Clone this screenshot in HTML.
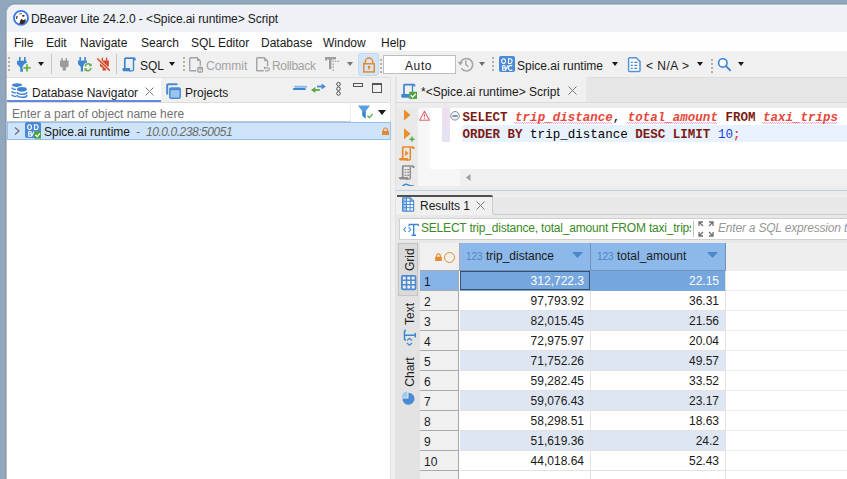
<!DOCTYPE html>
<html><head><meta charset="utf-8">
<style>
*{margin:0;padding:0;box-sizing:border-box}
html,body{width:847px;height:479px;overflow:hidden;background:#90a7bd;font-family:"Liberation Sans",sans-serif;font-size:12px;color:#1a1a1a}
.a{position:absolute}
.t{position:absolute;white-space:nowrap;line-height:14px}
.mono{font-family:"Liberation Mono",monospace}
svg{position:absolute;overflow:visible}
.tri{position:absolute;width:0;height:0;border-left:3.5px solid transparent;border-right:3.5px solid transparent;border-top:4px solid #1a1a1a}
.grip{position:absolute;width:2px;height:16px;background:repeating-linear-gradient(#b9b2a2 0 2px,transparent 2px 4px)}
.row{position:absolute;left:420px;width:427px;height:20px;border-bottom:1px solid #eeeeee}
.rn{position:absolute;left:0;top:0;width:39px;height:20px;background:#f0f0f0;border-right:1px solid #a9a9a9;border-bottom:1px solid #a9a9a9}
.rn span{position:absolute;left:4px;top:4px;line-height:14px}
.c1{position:absolute;left:40px;top:0;width:131px;height:20px;border-right:1px solid #e2e2e2;border-bottom:1px solid #e2e2e2;text-align:right;padding-right:6px;line-height:20px}
.c2{position:absolute;left:171px;top:0;width:135px;height:20px;border-right:1px solid #e2e2e2;border-bottom:1px solid #e2e2e2;text-align:right;padding-right:6px;line-height:20px}
.alt .c1,.alt .c2{background:#dfe6f3}
</style></head><body>
<!-- window -->
<div class="a" style="left:5px;top:3px;width:850px;height:480px;background:#8a9daf;border-top-left-radius:10px"></div>
<div class="a" style="left:6px;top:4px;width:850px;height:480px;background:#b6bfc8;border-top-left-radius:9px"></div>
<div class="a" style="left:7px;top:5px;width:850px;height:480px;background:#f0f0f0;border-top-left-radius:8px;overflow:hidden">
  <div class="a" style="left:0;top:0;width:850px;height:27px;background:#eef2f7;border-top:1px solid #f5f8fb"></div>
  <div class="a" style="left:0;top:27px;width:850px;height:19px;background:#fefefe"></div>
</div>
<!-- title -->
<svg style="left:13px;top:10px" width="16" height="16" viewBox="0 0 16 16">
  <circle cx="8" cy="7.9" r="7" fill="#fff" stroke="#3b75e6" stroke-width="1.8"/>
  <ellipse cx="10.3" cy="5.8" rx="1.3" ry="0.9" fill="#2a1e18"/>
  <path d="M6 3.8q1.5-1 3-0.6l-0.5 1.2q-1.3-0.3-2.3 0.3z" fill="#7a6a60"/>
  <path d="M3.2 6.3q0.5-0.6 1.5-0.6l-0.5 3-1.2 0.5z" fill="#4a3a30"/>
  <path d="M6.4 14q0.2-3 1.8-5.3q1.3 1.2 2.5 1.2q1.2-0.3 1.5-1.4l0.6 2.5q-1 2.2-3 3.3z" fill="#3a2a20"/>
</svg>
<div class="t" style="left:31px;top:12px;letter-spacing:-0.08px">DBeaver Lite 24.2.0 - &lt;Spice.ai runtime&gt; Script</div>
<!-- menu -->
<div class="t" style="left:14px;top:36px">File</div>
<div class="t" style="left:46px;top:36px">Edit</div>
<div class="t" style="left:80px;top:36px">Navigate</div>
<div class="t" style="left:141px;top:36px">Search</div>
<div class="t" style="left:191px;top:36px">SQL Editor</div>
<div class="t" style="left:261px;top:36px">Database</div>
<div class="t" style="left:323px;top:36px">Window</div>
<div class="t" style="left:381px;top:36px">Help</div>

<!-- toolbar -->
<div class="grip" style="left:8px;top:57px"></div>
<!-- plug + -->
<svg style="left:17px;top:57px" width="15" height="15" viewBox="0 0 15 15">
  <rect x="2" y="0" width="1.6" height="4" fill="#3d85d1"/><rect x="7" y="0" width="1.6" height="4" fill="#3d85d1"/>
  <path d="M0 3.7H9.7V6.3L6 10.5V14.7H3.3V10.5L0 7z" fill="#3d85d1"/>
  <path d="M6.4 12.2a4.6 4.6 0 0 1 4.7-5.4" stroke="#f0f0f0" stroke-width="2" fill="none"/>
  <path d="M10 7.2v7.3M6.4 10.8h7.3" stroke="#6cb04d" stroke-width="1.8"/>
</svg>
<div class="tri" style="left:38px;top:62px;border-left-width:3.5px;border-right-width:3.5px;border-top-width:4.5px"></div>
<div class="a" style="left:51px;top:54px;width:1px;height:20px;background:#c6c6c6"></div>
<!-- gray plug -->
<svg style="left:60px;top:58px" width="9" height="13" viewBox="0 0 9 13">
  <rect x="1.3" y="0" width="1.4" height="3" fill="#9b9b9b"/><rect x="5.6" y="0" width="1.4" height="3" fill="#9b9b9b"/>
  <path d="M0 2.6H8.6V7.5Q8.6 9 7 9.2L5.9 9.3V12.5H2.6V9.3L1.6 9.2Q0 9 0 7.5z" fill="#9b9b9b"/>
</svg>
<!-- blue plug refresh -->
<svg style="left:78px;top:57px" width="15" height="15" viewBox="0 0 15 15">
  <rect x="1.4" y="0" width="1.6" height="3.6" fill="#3d85d1"/><rect x="6.3" y="0" width="1.6" height="3.6" fill="#3d85d1"/>
  <path d="M0 3.5H9V6L5 10V14.5H2.8V10L0 7z" fill="#3d85d1"/>
  <circle cx="10" cy="10.2" r="4.8" fill="#f0f0f0"/>
  <path d="M7.2 9.5a3 3 0 0 1 5.2-1.8M12.9 11a3 3 0 0 1-5.2 1.8" stroke="#5aa845" stroke-width="1.5" fill="none"/>
  <path d="M13.6 6.3v3h-3z" fill="#5aa845"/><path d="M6.5 14.2v-3h3z" fill="#5aa845"/>
</svg>
<!-- red plug crossed -->
<svg style="left:97px;top:57px" width="14" height="15" viewBox="0 0 14 15">
  <rect x="4.6" y="0.7" width="1.4" height="3" fill="#d64a28"/><rect x="8.9" y="0.7" width="1.4" height="3" fill="#d64a28"/>
  <path d="M3 3.6H11.9V8.5Q11.9 10 10.3 10.2L9.1 10.3V13.5H5.5V10.3L4.5 10.2Q3 10 3 8.5z" fill="#d64a28"/>
  <path d="M0.3 1.5L12.8 13.6" stroke="#f0f0f0" stroke-width="3"/>
  <path d="M0.3 1.5L12.8 13.6" stroke="#d64a28" stroke-width="1.5"/>
</svg>
<div class="a" style="left:116px;top:54px;width:1px;height:20px;background:#c6c6c6"></div>
<!-- SQL scroll -->
<svg style="left:122px;top:57px" width="14" height="15" viewBox="0 0 14 15">
  <path d="M2.8 11.2V2.3a1.2 1.2 0 0 1 1.2-1.2H12.8" stroke="#3d85d1" stroke-width="1.7" fill="none"/>
  <path d="M11.5 1.5V12.3a1.6 1.6 0 0 1-1.6 1.6H7" stroke="#3d85d1" stroke-width="1.4" fill="none"/>
  <path d="M0.6 11H8.1V14.3H1.8a1.2 1.2 0 0 1-1.2-1.2z" fill="#3d85d1"/>
  <circle cx="12.6" cy="2.2" r="1.2" fill="#3d85d1"/>
</svg>
<div class="t" style="left:140px;top:59px">SQL</div>
<div class="tri" style="left:169px;top:62px;border-left-width:3.5px;border-right-width:3.5px;border-top-width:4.5px"></div>
<div class="grip" style="left:183px;top:57px"></div>
<!-- commit doc -->
<svg style="left:188px;top:56px" width="16" height="17" viewBox="0 0 16 17">
  <path d="M8.3 14.8H2.6a0.9 0.9 0 0 1-0.9-0.9V2.6a0.9 0.9 0 0 1 0.9-0.9H9L12.3 5v4.8" stroke="#a3a3a3" stroke-width="1.4" fill="none"/>
  <path d="M9 1.6V5.1h3.5z" fill="#a3a3a3"/>
  <rect x="9.9" y="11.4" width="4.6" height="4.6" rx="0.8" stroke="#a3a3a3" stroke-width="1.3" fill="none"/>
  <path d="M10.6 11.9l1.7 1.6 1.7-1.6" stroke="#a3a3a3" stroke-width="1.1" fill="none"/>
</svg>
<div class="t" style="left:206px;top:59px;color:#a2a2a2">Commit</div>
<!-- rollback doc -->
<svg style="left:255px;top:56px" width="17" height="17" viewBox="0 0 17 17">
  <path d="M8.8 14.8H2.6a0.9 0.9 0 0 1-0.9-0.9V2.6a0.9 0.9 0 0 1 0.9-0.9H9.2L12.6 5v5.3" stroke="#a3a3a3" stroke-width="1.4" fill="none"/>
  <path d="M9.2 1.6V5.3h3.7z" fill="#a3a3a3"/>
  <path d="M9.6 11.8h3.2a1.5 1.5 0 0 1 0 3H10" stroke="#a3a3a3" stroke-width="1.3" fill="none"/>
  <path d="M9.6 10.8v2.4" stroke="#a3a3a3" stroke-width="1.3"/>
</svg>
<div class="t" style="left:272px;top:59px;color:#a2a2a2;letter-spacing:-0.3px">Rollback</div>
<!-- T icon -->
<svg style="left:324px;top:56px" width="17" height="17" viewBox="0 0 17 17">
  <path d="M1 1h11v2.4H1z" fill="#9c9c9c"/>
  <path d="M1 1h2v3.6H1z" fill="#9c9c9c"/>
  <rect x="5" y="1" width="2.4" height="12" fill="#9c9c9c"/>
  <path d="M9.2 4.5v1.4M9.2 7.5v1.4M9.2 10.5v1.4M9.2 13.5v1.4" stroke="#a0a0a0" stroke-width="1.3"/>
  <path d="M11 5.4h1.4M13.6 5.4h1.4" stroke="#a0a0a0" stroke-width="1.4"/>
</svg>
<div class="tri" style="left:347px;top:62px;border-top-color:#777;border-left-width:3.3px;border-right-width:3.3px;border-top-width:4.5px"></div>
<div class="a" style="left:358px;top:53px;width:21px;height:23px;background:#d3e5fa;border:1px solid #c0daf6;border-radius:3px"></div>
<svg style="left:362px;top:57px" width="14" height="16" viewBox="0 0 14 16">
  <path d="M3.2 6.5V4.9a3.8 3.8 0 0 1 7.6 0v1.6" stroke="#e8892a" stroke-width="1.5" fill="none"/>
  <rect x="1.75" y="6.75" width="10.5" height="8.2" stroke="#e8892a" stroke-width="1.5" fill="#d3e5fa"/>
  <circle cx="7" cy="10" r="1.3" fill="#e8892a"/><rect x="6.4" y="10" width="1.2" height="2.6" fill="#e8892a"/>
</svg>
<div class="grip" style="left:380px;top:59px"></div>
<div class="a" style="left:383px;top:55px;width:73px;height:19px;background:#fff;border:1px solid #bdbdbd"></div>
<div class="t" style="left:405px;top:59px;letter-spacing:0.6px">Auto</div>
<!-- history clock -->
<svg style="left:457px;top:56px" width="17" height="17" viewBox="0 0 17 17">
  <path d="M3.6 6.3A6.3 6.3 0 1 1 4.4 12.6" stroke="#a6a6a6" stroke-width="1.6" fill="none"/>
  <path d="M0.8 5.8L3.3 9.4L6 6z" fill="#a6a6a6"/>
  <path d="M8.8 4.3v4.2l2.6 2.2" stroke="#a6a6a6" stroke-width="1.5" fill="none"/>
</svg>
<div class="tri" style="left:479px;top:62px;border-top-color:#6e6e6e;border-left-width:3.5px;border-right-width:3.5px;border-top-width:4.8px"></div>
<div class="grip" style="left:492px;top:57px"></div>
<svg style="left:499px;top:56px" width="16" height="16" viewBox="0 0 16 16">
  <rect x="0" y="0" width="16" height="16" rx="2" fill="#4a8ad4"/>
  <g stroke="#fff" stroke-width="1.1" fill="none">
  <ellipse cx="4.6" cy="5.1" rx="1.9" ry="2.4"/>
  <path d="M9.5 2.7V7.5H10.9A2.2 2.4 0 0 0 10.9 2.7z"/>
  <path d="M3.7 9.5V14.2H5.5a1.2 1.2 0 0 0 0-2.4H3.7M3.7 9.5H5.2a1.1 1.15 0 0 1 0 2.3"/>
  <path d="M6.4 14.6L9.3 9.2"/>
  <path d="M13.3 10.2A2.2 2.5 0 1 0 13.3 13.6"/>
  </g>
</svg>
<div class="t" style="left:517px;top:59px">Spice.ai runtime</div>
<div class="tri" style="left:612px;top:62px;border-left-width:3.5px;border-right-width:3.5px;border-top-width:4.5px"></div>
<!-- doc icon -->
<svg style="left:627px;top:56px" width="15" height="17" viewBox="0 0 15 17">
  <path d="M2.6 1.8H9.2L13 5.6V14.4a1 1 0 0 1-1 1H2.6a1 1 0 0 1-1-1V2.8a1 1 0 0 1 1-1z" stroke="#5593d6" stroke-width="1.5" fill="#fff"/>
  <path d="M3.8 6.3h2M7.3 6.3h3M3.8 9.4h2M7.3 9.4h3M3.8 12.4h2M7.3 12.4h3" stroke="#3d85d1" stroke-width="1.3"/>
</svg>
<div class="t" style="left:646px;top:59px;letter-spacing:0.5px">&lt; N/A &gt;</div>
<div class="tri" style="left:697px;top:62px;border-left-width:3.5px;border-right-width:3.5px;border-top-width:4.5px"></div>
<div class="grip" style="left:711px;top:59px"></div>
<svg style="left:717px;top:57px" width="15" height="15" viewBox="0 0 15 15">
  <circle cx="5.8" cy="5.9" r="4.2" stroke="#3d85d1" stroke-width="1.6" fill="#fff"/>
  <path d="M8.9 9l4.3 4.3" stroke="#3d85d1" stroke-width="1.8" stroke-linecap="round"/>
</svg>
<div class="tri" style="left:738px;top:62px;border-left-width:3.5px;border-right-width:3.5px;border-top-width:4.8px"></div>

<!-- left panel -->
<div class="a" style="left:7px;top:77px;width:384px;height:402px;background:#fff;border-right:1px solid #e3e3e3"></div>
<div class="a" style="left:7px;top:77px;width:384px;height:26px;background:#f0f0f0;border-top:1px solid #dedede;border-bottom:1px solid #dcdcdc;border-right:1px solid #e3e3e3"></div>
<div class="a" style="left:7px;top:78px;width:154px;height:24px;background:#fff"></div>
<div class="a" style="left:7px;top:100px;width:154px;height:2px;background:#6388de"></div>
<svg style="left:11px;top:82px" width="17" height="17" viewBox="0 0 17 17">
  <ellipse cx="6" cy="3.1" rx="5" ry="1.8" fill="#3d85d1"/>
  <path d="M1 5.6a5 2 0 0 0 10 0M1 9a5 2 0 0 0 10 0M1 12.4a5 2 0 0 0 10 0" stroke="#3d85d1" stroke-width="1.5" fill="none"/>
  <path d="M5 7.3a5.9 3.2 0 0 1 11.8 0V13.5a5.9 3.4 0 0 1-11.8 0z" fill="#fff"/>
  <ellipse cx="10.9" cy="7.3" rx="4.9" ry="2.4" fill="#3d85d1"/>
  <path d="M6 9.9a4.9 2.4 0 0 0 9.8 0M6 12.9a4.9 2.4 0 0 0 9.8 0" stroke="#3d85d1" stroke-width="1.6" fill="none"/>
</svg>
<div class="t" style="left:32px;top:86px">Database Navigator</div>
<svg style="left:145px;top:87px" width="9" height="9" viewBox="0 0 9 9"><path d="M0.5 0.5l8 8M8.5 0.5l-8 8" stroke="#7a7a7a" stroke-width="1"/></svg>
<svg style="left:166px;top:83px" width="16" height="17" viewBox="0 0 16 17">
  <path d="M1.2 11.5V2.2a1 1 0 0 1 1-1H11.5" stroke="#4a8ad4" stroke-width="2" fill="none"/>
  <rect x="3.8" y="5" width="10.4" height="10.2" rx="1.2" fill="#9cc5ee" stroke="#4a8ad4" stroke-width="1.5"/>
  <path d="M3.8 6.2h10.4" stroke="#4a8ad4" stroke-width="2"/>
</svg>
<div class="t" style="left:185px;top:86px">Projects</div>
<svg style="left:293px;top:85px" width="14" height="6" viewBox="0 0 14 6"><path d="M2.2 1.8h11" stroke="#8cb9e9" stroke-width="1.9" stroke-linecap="round"/><path d="M1 4h10.8" stroke="#3d85d1" stroke-width="2.1" stroke-linecap="round"/></svg>
<svg style="left:311px;top:83px" width="15" height="11" viewBox="0 0 15 11">
  <path d="M6 3.5h5" stroke="#4a8ad4" stroke-width="1.8"/><path d="M14.8 3.5L10.6 0.6V6.4z" fill="#4a8ad4"/>
  <path d="M3.8 7h5" stroke="#5aa845" stroke-width="1.8"/><path d="M0 7l4.3-2.9v5.8z" fill="#5aa845"/>
</svg>
<svg style="left:335px;top:81px" width="7" height="16" viewBox="0 0 7 16"><g stroke="#505050" stroke-width="1" fill="none"><circle cx="3.5" cy="3.2" r="1.8"/><circle cx="3.5" cy="7.8" r="1.8"/><circle cx="3.5" cy="12.4" r="1.8"/></g></svg>
<div class="a" style="left:353px;top:83px;width:10px;height:4px;border:1px solid #555"></div>
<div class="a" style="left:372px;top:83px;width:10px;height:10px;border:1px solid #555;border-top-width:2px"></div>
<!-- filter -->
<div class="a" style="left:7px;top:102px;width:344px;height:20px;border-bottom:1px solid #c9c9c9;border-right:1px solid #ececec"></div>
<div class="t" style="left:12px;top:107px;color:#727272">Enter a part of object name here</div>
<svg style="left:358px;top:105px" width="16" height="14" viewBox="0 0 16 14">
  <path d="M0 0.5h12L7.6 6.2v7.3L4.4 10.8V6.2z" fill="#5a9fe0"/>
  <path d="M4.4 6.2h3.2v7.3L4.4 10.8z" fill="#3d85d1"/>
  <path d="M9.5 10.8l1.9 1.9 3.2-3.8" stroke="#5fb04d" stroke-width="1.4" fill="none"/>
</svg>
<div class="tri" style="left:378px;top:110px;border-left-width:4px;border-right-width:4px;border-top-width:5px"></div>
<!-- tree row -->
<div class="a" style="left:7px;top:122px;width:384px;height:18px;background:#cde4fa;border:1px solid #93c0ec"></div>
<svg style="left:14px;top:127px" width="6" height="8" viewBox="0 0 6 8"><path d="M1 0.5l4 3.5-4 3.5" stroke="#6f6f6f" stroke-width="1.2" fill="none"/></svg>
<svg style="left:25px;top:122px" width="17" height="17" viewBox="0 0 17 17">
  <rect x="0" y="0" width="16" height="16" rx="2" fill="#4a8ad4"/>
  <g stroke="#fff" stroke-width="1.1" fill="none">
  <ellipse cx="4.6" cy="5.1" rx="1.9" ry="2.4"/>
  <path d="M9.5 2.7V7.5H10.9A2.2 2.4 0 0 0 10.9 2.7z"/>
  <path d="M3.7 9.5V14.2H5.5a1.2 1.2 0 0 0 0-2.4H3.7M3.7 9.5H5.2a1.1 1.15 0 0 1 0 2.3"/>
  <path d="M6.4 14.6L9.3 9.2"/>
  </g>
  <rect x="9.2" y="9.3" width="6.8" height="7.3" fill="#4ba43d"/>
  <path d="M10.4 12.8l1.8 1.8 2.8-3.3" stroke="#fff" stroke-width="1.3" fill="none"/>
</svg>
<div class="t" style="left:44px;top:125px">Spice.ai runtime</div>
<div class="t" style="left:136px;top:125px;font-style:italic;color:#6b6b6b">-</div><div class="t" style="left:146px;top:125px;font-style:italic;color:#6b6b6b;letter-spacing:-0.45px">10.0.0.238:50051</div>
<svg style="left:382px;top:127px" width="7" height="8" viewBox="0 0 7 8"><path d="M1.5 4V3a2 2 0 0 1 4 0v1" stroke="#e5892e" stroke-width="1.2" fill="none"/><rect x="0" y="4" width="7" height="4" fill="#e5892e"/></svg>

<!-- right panel: editor -->
<div class="a" style="left:395px;top:77px;width:452px;height:402px;background:#e8e8e8;border-left:1px solid #e2e2e2"></div>
<div class="a" style="left:396px;top:77px;width:451px;height:26px;background:#e6e6e6"></div>
<div class="a" style="left:395px;top:77px;width:452px;height:1px;background:#dedede"></div>
<div class="a" style="left:397px;top:77px;width:189px;height:25px;background:#f0f0f0"></div>
<svg style="left:401px;top:83px" width="17" height="17" viewBox="0 0 17 17">
  <path d="M3 11.5V2.3a0.6 0.6 0 0 1 .6-.6H13.5" stroke="#3d85d1" stroke-width="1.7" fill="none"/>
  <path d="M11.5 2v8" stroke="#3d85d1" stroke-width="1.3"/>
  <circle cx="13.4" cy="2.5" r="1.1" fill="#3d85d1"/>
  <path d="M0.3 11H8.4V14.7H1.5a1.2 1.2 0 0 1-1.2-1.2z" fill="#3d85d1"/>
  <rect x="8.2" y="8.8" width="7.8" height="7.1" fill="#4ba43d"/>
  <path d="M9.7 12.2l2 1.9 3-3.4" stroke="#fff" stroke-width="1.3" fill="none"/>
</svg>
<div class="t" style="left:421px;top:85px">*&lt;Spice.ai runtime&gt; Script</div>
<svg style="left:568px;top:86px" width="9" height="9" viewBox="0 0 9 9"><path d="M0.5 0.5l8 8M8.5 0.5l-8 8" stroke="#7a7a7a" stroke-width="1"/></svg>
<div class="a" style="left:396px;top:103px;width:451px;height:84px;background:#ececec"></div>
<div class="a" style="left:396px;top:102px;width:451px;height:1px;background:#dadada"></div>
<!-- editor side toolbar -->
<div class="a" style="left:396px;top:108px;width:22px;height:78px;background:#e9e9e9"></div>
<svg style="left:404px;top:109px" width="8" height="12" viewBox="0 0 8 12"><path d="M0 0.5l6.6 5.5L0 11.5z" fill="#e8912c"/></svg>
<svg style="left:404px;top:128px" width="12" height="14" viewBox="0 0 12 14"><path d="M0 0.3l6.6 5.5L0 11.3z" fill="#e8912c"/><path d="M8 8.6v5.2M5.4 11.2h5.2" stroke="#4fae49" stroke-width="1.4"/></svg>
<svg style="left:399px;top:146px" width="16" height="15" viewBox="0 0 16 15">
  <path d="M3.7 12V1.6a0.6 0.6 0 0 1 .6-.6H14.4" stroke="#e8892a" stroke-width="1.7" fill="none"/>
  <path d="M11.3 1.5V12.6a1.5 1.5 0 0 1-1.5 1.5H7" stroke="#e8892a" stroke-width="1.5" fill="none"/>
  <path d="M0.2 12H9V14.5H1.4a1.2 1.2 0 0 1-1.2-1.2z" fill="#e8892a"/>
  <circle cx="14.4" cy="1.9" r="1.2" fill="#e8892a"/>
  <path d="M6.2 4.3L9.6 7.3L6.2 10.3z" fill="#e8892a"/>
</svg>
<svg style="left:399px;top:165px" width="16" height="15" viewBox="0 0 16 15">
  <path d="M3.7 12V1.6a0.6 0.6 0 0 1 .6-.6H14.4" stroke="#8d8d8d" stroke-width="1.7" fill="none"/>
  <path d="M11.3 1.5V12.6a1.5 1.5 0 0 1-1.5 1.5H7" stroke="#8d8d8d" stroke-width="1.5" fill="none"/>
  <path d="M0.2 12H9V14.5H1.4a1.2 1.2 0 0 1-1.2-1.2z" fill="#8d8d8d"/>
  <circle cx="14.4" cy="1.9" r="1.2" fill="#8d8d8d"/>
  <path d="M5.6 4.6h1.6M8.2 4.6h1.8M5.6 7.4h1.6M8.2 7.4h1.8M5.6 10.2h1.6M8.2 10.2h1.8" stroke="#8d8d8d" stroke-width="1.4"/>
</svg>
<svg style="left:402px;top:183px" width="12" height="4" viewBox="0 0 12 4"><path d="M0.5 3.2Q3 0.4 5.5 1.6T11.5 3" stroke="#3d85d1" stroke-width="1.3" fill="none"/></svg>
<!-- editor body -->
<div class="a" style="left:419px;top:108px;width:428px;height:78px;background:#fff"></div>
<div class="a" style="left:418px;top:108px;width:12px;height:61px;background:#f7f7f7"></div>
<div class="a" style="left:442px;top:108px;width:8px;height:17px;background:#eddff0"></div>
<div class="a" style="left:442px;top:125px;width:8px;height:17px;background:#e6e2f2"></div>
<div class="a" style="left:462px;top:125px;width:385px;height:17px;background:#e8f2fe"></div>
<svg style="left:419px;top:110px" width="12" height="11" viewBox="0 0 12 11"><path d="M5.5 1.2L10.4 10.2H0.6z" stroke="#df6b78" stroke-width="1.1" fill="none" stroke-linejoin="round"/><path d="M5.5 4v3.3M5.5 8.2v1" stroke="#df6b78" stroke-width="1.1"/></svg>
<svg style="left:450px;top:111px" width="10" height="10" viewBox="0 0 10 10"><circle cx="5" cy="4.8" r="4.3" stroke="#7d8ea5" stroke-width="1" fill="#eef1f6"/><path d="M2.5 5h5" stroke="#44546a" stroke-width="1.2"/></svg>
<div class="a" style="left:514px;top:122px;width:98px;height:2px;background:repeating-linear-gradient(90deg,#eeaad0 0 1px,transparent 1px 2px) 0 0/100% 1px no-repeat,repeating-linear-gradient(90deg,transparent 0 1px,#eeaad0 1px 2px) 0 1px/100% 1px no-repeat"></div>
<div class="a" style="left:627px;top:122px;width:90px;height:2px;background:repeating-linear-gradient(90deg,#eeaad0 0 1px,transparent 1px 2px) 0 0/100% 1px no-repeat,repeating-linear-gradient(90deg,transparent 0 1px,#eeaad0 1px 2px) 0 1px/100% 1px no-repeat"></div>
<div class="a" style="left:762px;top:122px;width:75px;height:2px;background:repeating-linear-gradient(90deg,#eeaad0 0 1px,transparent 1px 2px) 0 0/100% 1px no-repeat,repeating-linear-gradient(90deg,transparent 0 1px,#eeaad0 1px 2px) 0 1px/100% 1px no-repeat"></div>
<div class="t mono" style="left:462.5px;top:111px;font-size:12.52px;color:#000"><b style="color:#7d1a12">SELECT</b> <i style="color:#e5483a;font-weight:bold;">trip_distance</i>, <i style="color:#e5483a;font-weight:bold;">total_amount</i> <b style="color:#7d1a12">FROM</b> <i style="color:#e5483a;font-weight:bold;">taxi_trips</i></div>
<div class="t mono" style="left:462.5px;top:128px;font-size:12.52px;color:#000"><b style="color:#7d1a12">ORDER BY</b> trip_distance <b style="color:#7d1a12">DESC LIMIT</b> <span style="color:#1b3ee0">10</span><b style="color:#e5483a">;</b></div>
<div class="a" style="left:418px;top:169px;width:43px;height:17px;background:#f7f7f7"></div>
<div class="a" style="left:460px;top:169px;width:387px;height:17px;background:#f0f0f0"></div>
<svg style="left:466px;top:174px" width="5" height="7" viewBox="0 0 5 7"><path d="M4.5 0v7L0 3.5z" fill="#a0a0a0"/></svg>
<!-- sash -->
<div class="a" style="left:396px;top:186px;width:451px;height:9px;background:#ececec"></div>
<div class="a" style="left:396px;top:190px;width:451px;height:1px;background:#bdd0e4"></div>

<!-- results tab -->
<div class="a" style="left:396px;top:195px;width:451px;height:23px;background:#f0f0f0"></div>
<div class="a" style="left:492px;top:197px;width:355px;height:18px;background:#e8e8e8;border-bottom:1px solid #cdcdcd;border-left:1px solid #cdcdcd;border-bottom-left-radius:3px"></div>
<div class="a" style="left:397px;top:195px;width:96px;height:2px;background:#505050;border-top-right-radius:2px"></div>
<svg style="left:402px;top:197px" width="13" height="16" viewBox="0 0 13 16">
  <path d="M0 1.3a1 1 0 0 1 1-1H8.7L12.2 3.8V13.8a1 1 0 0 1-1 1H1a1 1 0 0 1-1-1z" fill="#4a8ad4"/>
  <g fill="#a9ccf1"><rect x="1.4" y="1.6" width="2.6" height="2.2"/><rect x="1.4" y="4.8" width="2.6" height="2.2"/><rect x="1.4" y="8" width="2.6" height="2.2"/><rect x="1.4" y="11.2" width="2.6" height="2.3"/></g>
  <g fill="#fff"><rect x="5" y="1.6" width="2.6" height="2.2"/><rect x="5" y="4.8" width="2.6" height="2.2"/><rect x="8.6" y="4.8" width="2.4" height="2.2"/><rect x="5" y="8" width="2.6" height="2.2"/><rect x="8.6" y="8" width="2.4" height="2.2"/><rect x="5" y="11.2" width="2.6" height="2.3"/><rect x="8.6" y="11.2" width="2.4" height="2.3"/></g>
  <path d="M8.7 1.6L10.5 3.6H8.7z" fill="#a9ccf1"/>
</svg>
<div class="t" style="left:420px;top:199px">Results 1</div>
<svg style="left:476px;top:201px" width="9" height="9" viewBox="0 0 9 9"><path d="M0.5 0.5l8 8M8.5 0.5l-8 8" stroke="#7a7a7a" stroke-width="1"/></svg>
<div class="a" style="left:396px;top:215px;width:451px;height:264px;background:#e8e8e8"></div>
<div class="a" style="left:396px;top:242px;width:24px;height:237px;background:#e3e3e3"></div>
<div class="a" style="left:399px;top:218px;width:460px;height:22px;background:#fff;border:1px solid #cfcfcf"></div>
<svg style="left:403px;top:222px" width="16" height="14" viewBox="0 0 16 14">
  <path d="M3 5L0.8 7.5 3 10M5.5 5l2.2 2.5L5.5 10" stroke="#3f86d3" stroke-width="1.1" fill="none"/>
  <path d="M6 2.5h9.5M6 2.5v1.5M15.5 2.5v1.5M10.7 2.5v11M8.5 13.3h4.5" stroke="#3f86d3" stroke-width="1.4" fill="none"/>
</svg>
<div style="position:absolute;left:421px;top:221px;width:270px;overflow:hidden;white-space:nowrap;line-height:14px;color:#3a8a26;letter-spacing:-0.2px">SELECT trip_distance, total_amount FROM taxi_trips</div>
<div class="a" style="left:693px;top:221px;width:1px;height:16px;background:#c0c0c0"></div>
<svg style="left:698px;top:221px" width="16" height="16" viewBox="0 0 16 16">
  <path d="M1 5V1h4M1 1l4 4M15 5V1h-4M15 1l-4 4M1 11v4h4M1 15l4-4M15 11v4h-4M15 15l-4-4" stroke="#707070" stroke-width="1.3" fill="none"/>
</svg>
<div class="t" style="left:718px;top:221px;color:#979797;font-style:italic;letter-spacing:-0.2px">Enter a SQL expression to filter results (use Ctrl+Space)</div>

<!-- vertical tabs -->
<div class="a" style="left:398px;top:243px;width:20px;height:53px;background:#dadada;border:1px solid #c4c4c4"></div>
<div class="t" style="left:399px;top:253px;transform:rotate(-90deg);transform-origin:center;width:22px;text-align:center">Grid</div>
<svg style="left:401px;top:275px" width="16" height="16" viewBox="0 0 16 16">
  <rect x="0" y="0" width="15.4" height="15.2" rx="2" fill="#4a8ad4"/>
  <path d="M1.8 1.7h2.9v2.9H1.8zM6.3 1.7h2.9v2.9H6.3zM10.7 1.7h2.9v2.9h-2.9zM1.8 6.1h2.9v2.9H1.8zM6.3 6.1h2.9v2.9H6.3zM10.7 6.1h2.9v2.9h-2.9zM1.8 10.5h2.9v2.9H1.8zM6.3 10.5h2.9v2.9H6.3zM10.7 10.5h2.9v2.9h-2.9z" fill="#f1efea"/>
</svg>
<div class="t" style="left:399px;top:307px;transform:rotate(-90deg);transform-origin:center;width:22px;text-align:center">Text</div>
<svg style="left:401px;top:331px;transform:rotate(-90deg)" width="16" height="14" viewBox="0 0 16 14">
  <path d="M3 5L0.8 7.5 3 10M5.5 5l2.2 2.5L5.5 10" stroke="#3d85d1" stroke-width="1.2" fill="none"/>
  <path d="M6 2.5h9.5M6 2.5v1.5M15.5 2.5v1.5M10.7 2.5v11M8.5 13.3h4.5" stroke="#3d85d1" stroke-width="1.5" fill="none"/>
</svg>
<div class="t" style="left:395px;top:365px;transform:rotate(-90deg);transform-origin:center;width:30px;text-align:center">Chart</div>
<svg style="left:401px;top:391px" width="14" height="14" viewBox="0 0 14 14">
  <path d="M7.5 7.6V1.8A6 6 0 1 1 1.5 7.6z" fill="#4a8ad4"/>
  <path d="M6.3 6.4H0.5A5.8 5.8 0 0 1 6.3 0.6z" fill="#9fc8ee"/>
</svg>

<!-- grid -->
<div class="a" style="left:420px;top:243px;width:427px;height:236px;background:#fff"></div>
<div class="a" style="left:420px;top:243px;width:427px;height:28px;background:#eeeeee"></div>
<div class="a" style="left:420px;top:243px;width:40px;height:28px;background:#f0f0f0;border-right:1px solid #a9a9a9;border-bottom:1px solid #a9a9a9"></div>
<svg style="left:435px;top:253px" width="7" height="8" viewBox="0 0 7 8"><path d="M1.7 4V2.7a1.8 1.8 0 0 1 3.6 0V4" stroke="#e8892a" stroke-width="1.1" fill="none"/><rect x="0.2" y="3.8" width="6.6" height="4.2" fill="#e8892a"/></svg>
<div class="a" style="left:444px;top:252px;width:11px;height:11px;border-radius:50%;border:1.3px solid #e8892a"></div>
<div class="a" style="left:460px;top:243px;width:131px;height:28px;background:#8cb9ea;border-right:1px solid #6f93bc;border-bottom:1px solid #6f93bc"></div>
<div class="t" style="left:466px;top:250px;font-size:10px;color:#4f87c9">123</div>
<div class="t" style="left:486px;top:249px">trip_distance</div>
<svg style="left:572px;top:252px" width="11" height="6" viewBox="0 0 11 6"><path d="M0 0h11L5.5 6z" fill="#4a86c8"/></svg>
<div class="a" style="left:591px;top:243px;width:135px;height:28px;background:#8cb9ea;border-right:1px solid #6f93bc;border-bottom:1px solid #6f93bc"></div>
<div class="t" style="left:597px;top:250px;font-size:10px;color:#4f87c9">123</div>
<div class="t" style="left:617px;top:249px">total_amount</div>
<svg style="left:707px;top:252px" width="11" height="6" viewBox="0 0 11 6"><path d="M0 0h11L5.5 6z" fill="#4a86c8"/></svg>

<div class="row" style="top:271px"><div class="rn" style="background:#86b4e8"><span>1</span></div><div class="c1" style="background:#76a6de;color:#fff;border-right-color:#7aa8dc;border-bottom-color:#7aa8dc">312,722.3<div class="a" style="left:0;top:0;width:130px;height:19px;border:1px solid #34506f"></div></div><div class="c2" style="background:#76a6de;color:#fff;border-bottom-color:#7aa8dc">22.15</div></div>
<div class="row" style="top:291px"><div class="rn"><span>2</span></div><div class="c1">97,793.92</div><div class="c2">36.31</div></div>
<div class="row alt" style="top:311px"><div class="rn"><span>3</span></div><div class="c1">82,015.45</div><div class="c2">21.56</div></div>
<div class="row" style="top:331px"><div class="rn"><span>4</span></div><div class="c1">72,975.97</div><div class="c2">20.04</div></div>
<div class="row alt" style="top:351px"><div class="rn"><span>5</span></div><div class="c1">71,752.26</div><div class="c2">49.57</div></div>
<div class="row" style="top:371px"><div class="rn"><span>6</span></div><div class="c1">59,282.45</div><div class="c2">33.52</div></div>
<div class="row alt" style="top:391px"><div class="rn"><span>7</span></div><div class="c1">59,076.43</div><div class="c2">23.17</div></div>
<div class="row" style="top:411px"><div class="rn"><span>8</span></div><div class="c1">58,298.51</div><div class="c2">18.63</div></div>
<div class="row alt" style="top:431px"><div class="rn"><span>9</span></div><div class="c1">51,619.36</div><div class="c2">24.2</div></div>
<div class="row" style="top:451px"><div class="rn"><span>10</span></div><div class="c1">44,018.64</div><div class="c2">52.43</div></div>
<div class="row" style="top:471px"><div class="rn"></div><div class="c1" style="border-bottom:0"></div><div class="c2" style="border-bottom:0"></div></div>

</body></html>
